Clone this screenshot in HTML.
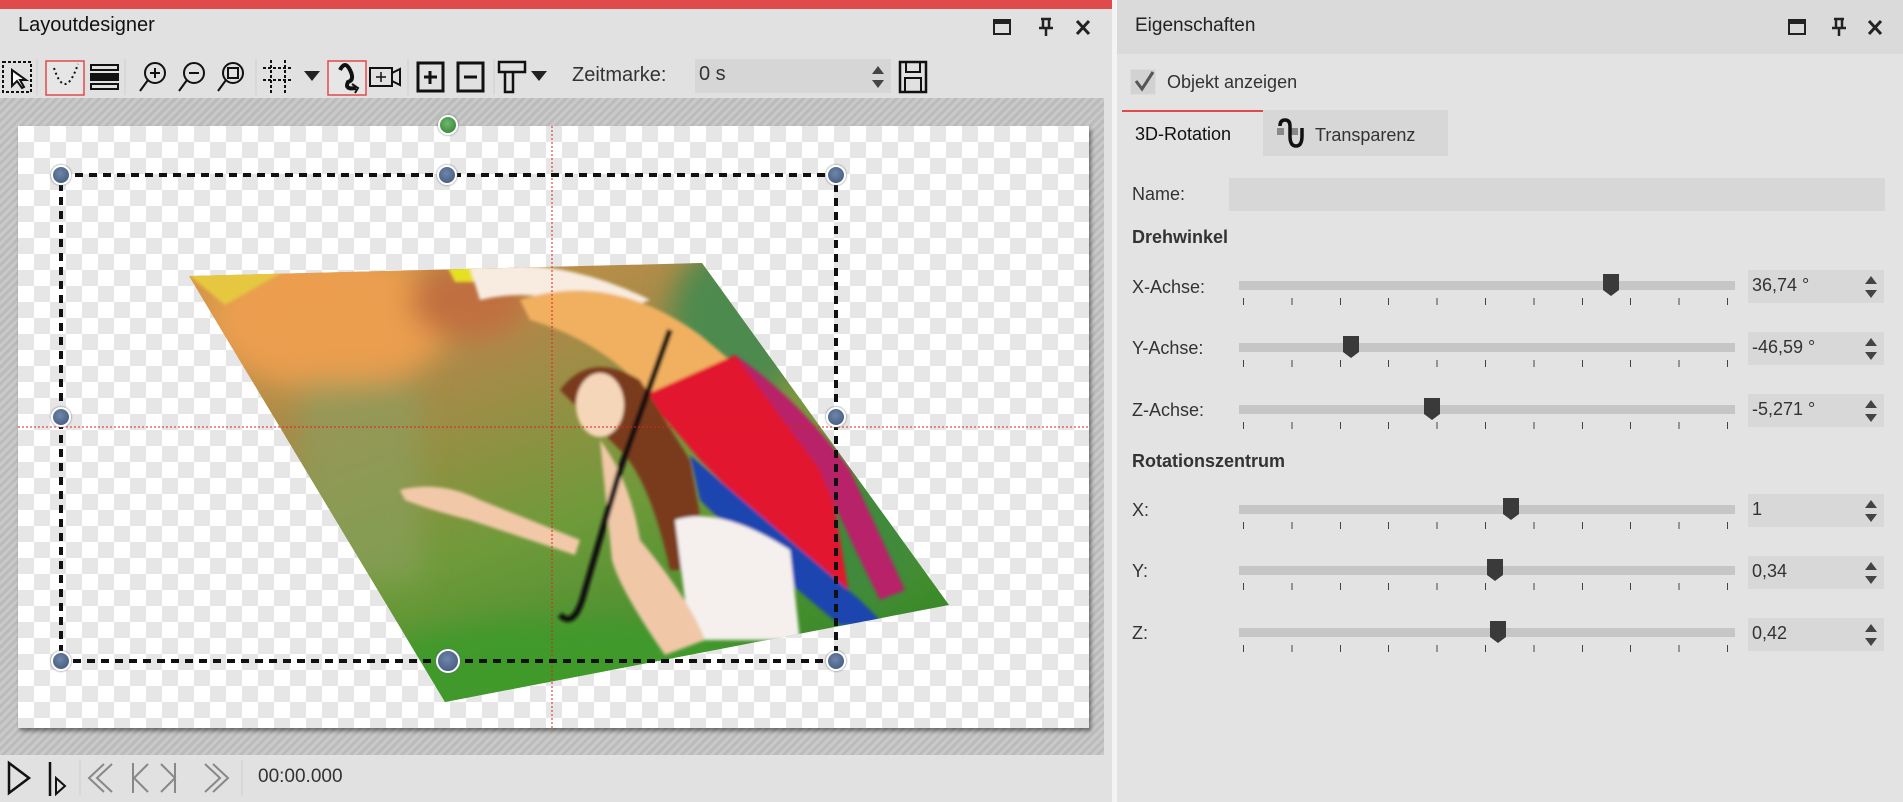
<!DOCTYPE html>
<html><head><meta charset="utf-8"><style>
*{margin:0;padding:0;box-sizing:border-box}
body{width:1903px;height:802px;overflow:hidden;background:#e3e3e3;font-family:"Liberation Sans",sans-serif;color:#222;position:relative}
.a{position:absolute}
.lbl{font-size:18px;color:#333}
.track{position:absolute;left:1239px;width:496px;height:9px;background:#c6c6c6}
.ticks{position:absolute;left:1243px;width:486px;height:7px;background:repeating-linear-gradient(90deg,#444 0 1px,transparent 1px 48.4px)}
.thumb{position:absolute;width:16px;height:22px}
.val{position:absolute;left:1748px;width:136px;height:33px;background:#d8d8d8;font-size:18px;padding:5px 4px;color:#333}
.spin{position:absolute;right:6px;top:5px;width:14px;height:24px}
.h{position:absolute;width:20px;height:20px;border-radius:50%;background:radial-gradient(circle at 45% 40%,#6f86ab,#3d5478);border:2px solid #fff;box-shadow:0 0 2px #666}
</style></head><body>
<div class="a" style="left:0;top:0;width:1112px;height:9px;background:#e04a4a"></div>
<div class="a" style="left:0;top:9px;width:1112px;height:793px;background:#e1e1e1"></div>
<div class="a" style="left:18px;top:14px;font-size:20px;color:#111">Layoutdesigner</div>
<svg class="a" style="left:990px;top:16px" width="115" height="24" viewBox="0 0 115 24">
<rect x="4" y="4" width="16" height="14" fill="none" stroke="#222" stroke-width="2"/><rect x="4" y="4" width="16" height="4" fill="#222"/>
<path d="M51 3h10M53 3v9h6V3M49 12h14M56 12v8" stroke="#222" stroke-width="2.5" fill="none"/>
<path d="M87 5l12 13M99 5L87 18" stroke="#222" stroke-width="3"/>
</svg>
<svg class="a" style="left:0;top:56px" width="940" height="42" viewBox="0 0 940 42">
<g fill="none" stroke="#111" stroke-width="2">
<rect x="3" y="6" width="28" height="30" stroke-dasharray="3 2"/>
<path d="M12 14l0 16 5-5 5 7 2-1-4-7 6 0z" fill="#fff"/>
<rect x="46" y="5" width="38" height="34" stroke="#e04a4a" stroke-width="1.5" fill="#e6e6e6"/>
<path d="M54 12q11 34 24-4" stroke-dasharray="2 3"/>
<rect x="91" y="9" width="27" height="5"/><rect x="91" y="18" width="27" height="6" fill="#111"/><rect x="91" y="28" width="27" height="5"/>
<circle cx="155" cy="17" r="10"/><path d="M148 24l-8 11M150 17h10M155 12v10"/>
<circle cx="194" cy="17" r="10"/><path d="M187 24l-8 11M189 17h10"/>
<circle cx="233" cy="17" r="10"/><path d="M226 24l-8 11"/><rect x="228" y="12" width="10" height="10"/>
<path d="M263 12h30M263 24h30M271 4v34M285 4v34" stroke-dasharray="3 2"/>
<rect x="328" y="5" width="38" height="34" stroke="#e04a4a" stroke-width="1.5" fill="#e6e6e6"/>
<path d="M340 14q5-10 10 0t-2 12q-4 8 8 6" stroke-width="4"/><path d="M352 28l6 4-3 5" stroke-width="2"/>
<rect x="370" y="12" width="22" height="18"/><path d="M392 17l8-4v16l-8-4"/><path d="M381 16v10M376 21h10" stroke-width="1.5"/>
<rect x="418" y="7" width="25" height="28" stroke-width="3"/><path d="M424 21h13M430 15v13" stroke-width="3"/>
<rect x="458" y="7" width="25" height="28" stroke-width="3"/><path d="M464 21h13" stroke-width="3"/>
<rect x="499" y="6" width="26" height="10" stroke-width="2.5"/><path d="M505 16v20h8V16" stroke-width="2.5"/>
<rect x="900" y="6" width="26" height="30" stroke-width="2.5"/><rect x="906" y="6" width="14" height="10"/><rect x="905" y="22" width="16" height="14"/>
</g>
<path d="M304 15h16l-8 10z M531 15h16l-8 10z" fill="#222"/>
<path d="M37 3v36M125 3v36M256 3v36M408 3v36M494 3v36" stroke="#cfcfcf"/>
</svg>
<div class="a" style="left:572px;top:64px;font-size:20px;color:#333">Zeitmarke:</div>
<div class="a" style="left:695px;top:59px;width:196px;height:34px;background:#d6d6d6;font-size:20px;padding:4px 4px;color:#333">0 s
<svg class="a" style="right:6px;top:6px" width="14" height="24"><path d="M7 1l6 8H1zM7 23l6-8H1z" fill="#444"/></svg></div>
<div class="a" style="left:0;top:98px;width:1104px;height:657px;background:repeating-linear-gradient(135deg,#c9c9c9 0 3px,#bbbbbb 3px 6px)"></div>
<div class="a" style="left:18px;top:126px;width:1071px;height:602px;background-color:#fff;background-image:linear-gradient(45deg,#e6e6e6 25%,transparent 25%,transparent 75%,#e6e6e6 75%),linear-gradient(45deg,#e6e6e6 25%,transparent 25%,transparent 75%,#e6e6e6 75%);background-size:32px 32px;background-position:0 0,16px 16px;box-shadow:2px 3px 4px rgba(0,0,0,.45)"></div>
<svg class="a" style="left:0;top:0" width="1104" height="755">
<defs>
<clipPath id="q"><polygon points="189,276 702,263 949,605 445,702"/></clipPath>
<linearGradient id="bg" x1="0" y1="0" x2="0.6" y2="1"><stop offset="0" stop-color="#e09a48"/><stop offset="0.35" stop-color="#a98a48"/><stop offset="0.65" stop-color="#6f9a3a"/><stop offset="1" stop-color="#3a8a2a"/></linearGradient>
<filter id="bl"><feGaussianBlur stdDeviation="14"/></filter>
<filter id="sb"><feGaussianBlur stdDeviation="1.5"/></filter>
</defs>
<g clip-path="url(#q)">
<rect x="180" y="250" width="780" height="460" fill="url(#bg)"/>
<g filter="url(#bl)">
<ellipse cx="330" cy="320" rx="120" ry="70" fill="#f0a050" opacity=".9"/>
<ellipse cx="470" cy="300" rx="60" ry="40" fill="#c07040"/>
<ellipse cx="740" cy="320" rx="70" ry="80" fill="#4d8a4e"/>
<ellipse cx="860" cy="540" rx="60" ry="70" fill="#3f8a3a"/>
<ellipse cx="560" cy="670" rx="200" ry="50" fill="#3f9a2a"/>
<rect x="300" y="380" width="120" height="200" fill="#8aa060" opacity=".6"/>
</g>
<g filter="url(#sb)">
<polygon points="185,272 290,268 225,305" fill="#e6c840"/>
<polygon points="445,262 482,262 490,282 455,282" fill="#e6e020"/>
<path d="M470 268 Q560 255 650 300 L610 315 Q540 285 480 300Z" fill="#f8ece0"/>
<path d="M520 300 Q610 270 700 335 L730 360 L650 395 Q600 340 530 320Z" fill="#f0b060"/>
<path d="M645 395 L735 355 Q790 400 830 480 L850 600 Q800 560 760 520 L700 460Z" fill="#e2182e"/>
<path d="M735 355 Q800 400 850 470 L905 590 L880 600 Q840 520 820 470Z" fill="#b82068"/>
<path d="M690 455 L760 515 L860 600 L885 625 L840 625 Q760 560 700 500Z" fill="#1f44b0"/>
<path d="M560 390 Q590 350 640 380 L690 460 L710 570 L670 570 Q650 480 620 450Z" fill="#7a3a1c"/>
<ellipse cx="600" cy="405" rx="24" ry="32" fill="#f6d6b8"/>
<path d="M675 520 Q720 505 790 550 L800 640 L690 640Z" fill="#f5f0ee"/>
<path d="M600 440 Q630 480 640 540 Q690 600 705 640 L665 655 Q620 590 612 560Z" fill="#f0c8a8"/>
<path d="M400 490 Q440 480 480 500 L580 540 L575 555 L470 520 Q430 510 405 500Z" fill="#f2c9a8"/>
<path d="M670 330 L620 470 L585 590 Q575 630 560 615" stroke="#111" stroke-width="6" fill="none"/>
</g>
</g>
<g stroke="#e02020" stroke-dasharray="2 2" stroke-width="1"><line x1="552" y1="126" x2="552" y2="728"/><line x1="18" y1="427" x2="1089" y2="427"/></g>
<rect x="61" y="175" width="775" height="486" fill="none" stroke="#111" stroke-width="4" stroke-dasharray="8 6"/>
</svg>
<div class="h" style="left:438px;top:115px;background:radial-gradient(circle at 45% 40%,#6cba6c,#2f7a2f)"></div>
<div class="h" style="left:51px;top:165px"></div><div class="h" style="left:437px;top:165px"></div><div class="h" style="left:826px;top:165px"></div>
<div class="h" style="left:51px;top:407px"></div><div class="h" style="left:826px;top:407px"></div>
<div class="h" style="left:51px;top:651px"></div><div class="h" style="left:436px;top:649px;width:24px;height:24px"></div><div class="h" style="left:826px;top:651px"></div>
<svg class="a" style="left:0;top:758px" width="260" height="40">
<path d="M9 5l20 15-20 15z" fill="none" stroke="#111" stroke-width="2.5"/>
<path d="M50 4v34" stroke="#111" stroke-width="2.5"/><path d="M56 20l9 8-9 8z" fill="none" stroke="#111" stroke-width="2"/>
<g fill="none" stroke="#888" stroke-width="2"><path d="M112 6l-15 14 15 14M104 6l-15 14 15 14"/><path d="M133 5v30M148 6l-14 14 14 14"/><path d="M175 5v30M161 6l14 14-14 14"/><path d="M205 6l15 14-15 14M213 6l15 14-15 14"/></g>
<path d="M80 2v36M242 2v36" stroke="#cfcfcf"/>
</svg>
<div class="a" style="left:258px;top:766px;font-size:19px;color:#333">00:00.000</div>
<div class="a" style="left:1112px;top:0;width:5px;height:802px;background:#f4f4f4"></div>
<div class="a" style="left:1117px;top:0;width:786px;height:54px;background:#dadada"></div>
<div class="a" style="left:1135px;top:15px;font-size:19px;color:#222">Eigenschaften</div>
<svg class="a" style="left:1785px;top:16px" width="115" height="24" viewBox="0 0 115 24">
<rect x="4" y="4" width="16" height="14" fill="none" stroke="#222" stroke-width="2"/><rect x="4" y="4" width="16" height="4" fill="#222"/>
<path d="M49 3h10M51 3v9h6V3M47 12h14M54 12v8" stroke="#222" stroke-width="2.5" fill="none"/>
<path d="M84 5l12 13M96 5L84 18" stroke="#222" stroke-width="3"/>
</svg>
<div class="a" style="left:1130px;top:69px;width:26px;height:26px;background:#d2d2d2;border:1px solid #ddd"></div>
<svg class="a" style="left:1131px;top:68px" width="26" height="26"><path d="M5 13l6 8 11-17" stroke="#555" stroke-width="3" fill="none"/></svg>
<div class="a lbl" style="left:1167px;top:72px">Objekt anzeigen</div>
<div class="a" style="left:1122px;top:110px;width:141px;height:2px;background:#e04a4a"></div>
<div class="a lbl" style="left:1135px;top:124px;color:#111">3D-Rotation</div>
<div class="a" style="left:1263px;top:110px;width:185px;height:46px;background:#d7d7d7"></div>
<svg class="a" style="left:1276px;top:118px" width="30" height="32"><rect x="1" y="10" width="7" height="7" fill="#888"/><rect x="15" y="10" width="7" height="7" fill="#888"/><path d="M4 8q0-6 5-6t5 6v10q0 10 6 10t6-10V10" stroke="#111" stroke-width="3.5" fill="none"/></svg>
<div class="a lbl" style="left:1315px;top:125px">Transparenz</div>
<div class="a lbl" style="left:1132px;top:184px">Name:</div>
<div class="a" style="left:1229px;top:178px;width:656px;height:33px;background:#d7d7d7"></div>
<div class="a" style="left:1132px;top:227px;font-size:18px;font-weight:bold;color:#333">Drehwinkel</div>
<div class="a" style="left:1132px;top:451px;font-size:18px;font-weight:bold;color:#333">Rotationszentrum</div>

<div class="a lbl" style="left:1132px;top:277px">X-Achse:</div>
<div class="track" style="top:281px"></div><div class="ticks" style="top:298px"></div>
<svg class="thumb" style="left:1603px;top:274px"><path d="M0 0h16v16l-8 6-8-6z" fill="#3a3a3a"/></svg>
<div class="val" style="top:270px">36,74 °<svg class="spin"><path d="M7 1l6 8H1zM7 23l6-8H1z" fill="#444"/></svg></div>

<div class="a lbl" style="left:1132px;top:338px">Y-Achse:</div>
<div class="track" style="top:343px"></div><div class="ticks" style="top:360px"></div>
<svg class="thumb" style="left:1343px;top:336px"><path d="M0 0h16v16l-8 6-8-6z" fill="#3a3a3a"/></svg>
<div class="val" style="top:332px">-46,59 °<svg class="spin"><path d="M7 1l6 8H1zM7 23l6-8H1z" fill="#444"/></svg></div>

<div class="a lbl" style="left:1132px;top:400px">Z-Achse:</div>
<div class="track" style="top:405px"></div><div class="ticks" style="top:422px"></div>
<svg class="thumb" style="left:1424px;top:398px"><path d="M0 0h16v16l-8 6-8-6z" fill="#3a3a3a"/></svg>
<div class="val" style="top:394px">-5,271 °<svg class="spin"><path d="M7 1l6 8H1zM7 23l6-8H1z" fill="#444"/></svg></div>

<div class="a lbl" style="left:1132px;top:500px">X:</div>
<div class="track" style="top:505px"></div><div class="ticks" style="top:522px"></div>
<svg class="thumb" style="left:1503px;top:498px"><path d="M0 0h16v16l-8 6-8-6z" fill="#3a3a3a"/></svg>
<div class="val" style="top:494px">1<svg class="spin"><path d="M7 1l6 8H1zM7 23l6-8H1z" fill="#444"/></svg></div>

<div class="a lbl" style="left:1132px;top:561px">Y:</div>
<div class="track" style="top:566px"></div><div class="ticks" style="top:583px"></div>
<svg class="thumb" style="left:1487px;top:559px"><path d="M0 0h16v16l-8 6-8-6z" fill="#3a3a3a"/></svg>
<div class="val" style="top:556px">0,34<svg class="spin"><path d="M7 1l6 8H1zM7 23l6-8H1z" fill="#444"/></svg></div>

<div class="a lbl" style="left:1132px;top:623px">Z:</div>
<div class="track" style="top:628px"></div><div class="ticks" style="top:645px"></div>
<svg class="thumb" style="left:1490px;top:621px"><path d="M0 0h16v16l-8 6-8-6z" fill="#3a3a3a"/></svg>
<div class="val" style="top:618px">0,42<svg class="spin"><path d="M7 1l6 8H1zM7 23l6-8H1z" fill="#444"/></svg></div>
</body></html>
